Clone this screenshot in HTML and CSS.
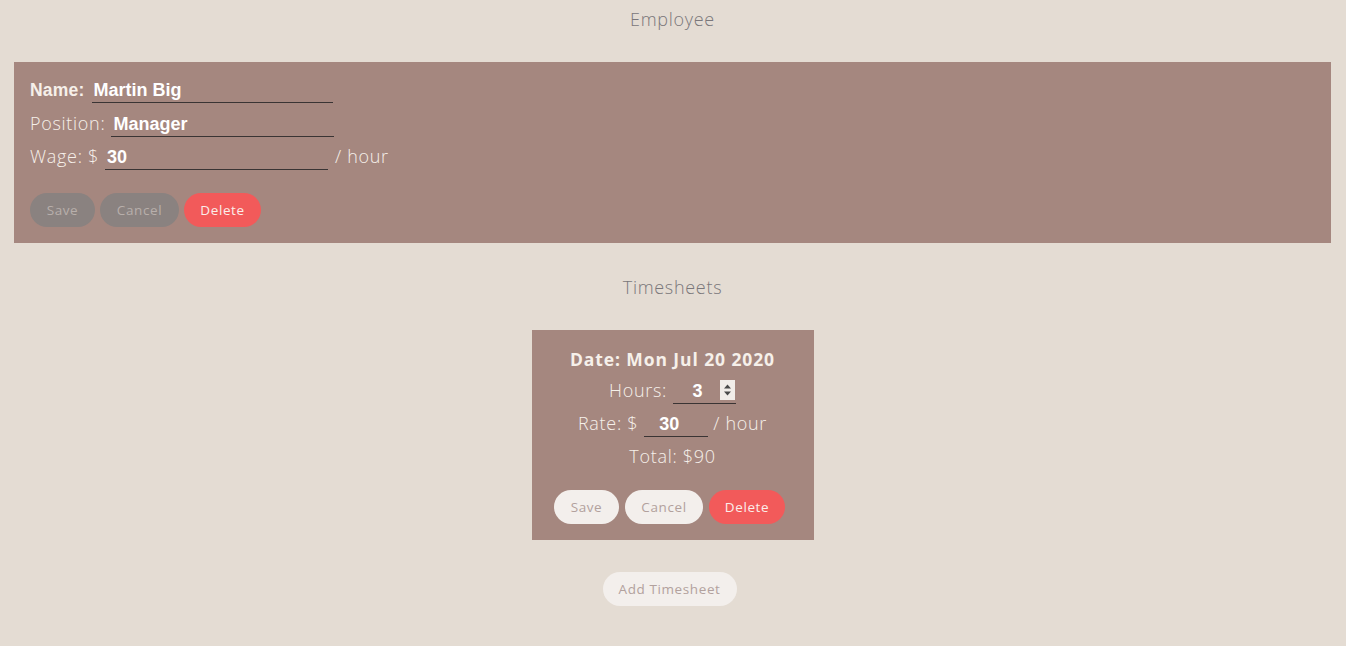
FILE: index.html
```html
<!DOCTYPE html>
<html>
<head>
<meta charset="utf-8">
<link rel="stylesheet" href="styles.css">
</head>
<body>
<main class="page">
  <h2 class="heading heading-employee">Employee</h2>
  <section class="card employee">
    <div class="row"><label class="lbl lbl-name">Name:</label><input class="field field-name" type="text" value="Martin Big"></div>
    <div class="row"><label class="lbl">Position:</label><input class="field field-wage" type="text" value="Manager"></div>
    <div class="row"><label class="lbl">Wage: $</label><input class="field field-wage" type="text" value="30"><span class="unit">/ hour</span></div>
    <div class="buttons">
      <button class="btn btn-muted btn-save">Save</button>
      <button class="btn btn-muted btn-cancel">Cancel</button>
      <button class="btn btn-danger btn-delete">Delete</button>
    </div>
  </section>
  <h2 class="heading heading-ts">Timesheets</h2>
  <section class="card timesheet">
    <div class="trow bold date">Date: Mon Jul 20 2020</div>
    <div class="trow"><span class="lbl lbl-hours">Hours:</span><span class="num-wrap"><input class="field field-hours" type="number" value="3"><span class="spinner"><svg width="15" height="20" viewBox="0 0 15 20"><rect width="15" height="20" fill="#f1ede9"/><path d="M4 8.5 L7.5 4.5 L11 8.5 Z" fill="#4a4a4a"/><path d="M4 11.5 L7.5 15.5 L11 11.5 Z" fill="#4a4a4a"/></svg></span></span></div>
    <div class="trow"><span class="lbl">Rate: $</span><input class="field field-rate" type="text" value="30"><span class="unit unit-rate">/ hour</span></div>
    <div class="trow">Total: $90</div>
    <div class="buttons tbuttons">
      <button class="btn btn-light btn-save">Save</button>
      <button class="btn btn-light btn-cancel">Cancel</button>
      <button class="btn btn-danger btn-delete">Delete</button>
    </div>
  </section>
  <button class="btn btn-light btn-add">Add Timesheet</button>
</main>
</body>
</html>
```
FILE: styles.css
```css
html, body {
  margin: 0;
  padding: 0;
  background: #e4dcd3;
}
body {
  font-family: "Open Sans", "Liberation Sans", sans-serif;
  color: #f6f0ea;
}
.page {
  display: flex;
  flex-direction: column;
  align-items: center;
  padding: 0 15px 0 14px;
}
.heading {
  margin: 0;
  font-weight: 300;
  font-size: 18px;
  letter-spacing: 0.7px;
  color: #7a777a;
  line-height: 20px;
}
.heading-employee {
  padding-top: 9px;
  margin-bottom: 33px;
}
.heading-ts {
  margin-top: 34px;
  margin-bottom: 33px;
}
.card {
  background: #a5877f;
  box-sizing: border-box;
}
.employee {
  align-self: stretch;
  padding: 12px 16px 16px;
  display: flex;
  flex-direction: column;
}
.row {
  display: flex;
  align-items: baseline;
  box-sizing: border-box;
  height: 33px;
  padding-top: 4px;
  font-size: 18px;
  font-weight: 300;
  letter-spacing: 0.7px;
}
.lbl {
  margin-right: 6px;
}
.bold {
  font-weight: 700;
}
.lbl-name {
  font-family: "Liberation Sans", Arial, sans-serif;
  font-weight: 700;
  font-size: 17.5px;
  letter-spacing: 0.2px;
  margin-right: 7px;
}
.field {
  font-family: "Liberation Sans", Arial, sans-serif;
  font-size: 18px;
  font-weight: 700;
  letter-spacing: 0;
  color: #fff;
  background: transparent;
  border: none;
  border-bottom: 1px solid #3a3434;
  padding: 2px 2px 1px;
  outline: none;
  box-sizing: border-box;
}
.field-name { width: 241px; }
.field-wage { width: 223px; }
.unit {
  margin-left: 7px;
}
.unit-rate {
  margin-left: 5px;
}
.buttons {
  display: flex;
  gap: 5px;
  margin-top: 20px;
}
.btn {
  font-family: "Open Sans", "Liberation Sans", sans-serif;
  font-size: 13.5px;
  letter-spacing: 0.6px;
  font-weight: 400;
  height: 34px;
  border: none;
  border-radius: 17px;
  padding: 0;
}
.btn-muted {
  background: #8a8280;
  color: #b8afab;
}
.btn-danger {
  background: #f25a5a;
  color: #fbeeea;
}
.btn-light {
  background: #f3efec;
  color: #b2a19d;
}
.btn-save { width: 65px; }
.btn-cancel { width: 79px; }
.btn-delete { width: 77px; }
.timesheet {
  width: 282px;
  padding: 14px 0 16px;
  display: flex;
  flex-direction: column;
  align-items: center;
}
.trow {
  box-sizing: border-box;
  height: 33px;
  padding-top: 3px;
  display: flex;
  align-items: baseline;
  justify-content: center;
  font-size: 18px;
  font-weight: 300;
  letter-spacing: 0.7px;
}
.date {
  height: 31px;
  font-size: 17.5px;
  font-weight: 700;
  letter-spacing: 0.9px;
}
.lbl-hours {
  margin-right: 6px;
}
.num-wrap {
  position: relative;
  display: inline-block;
}
.field-hours {
  width: 63px;
  text-align: center;
  padding-left: 4px;
  padding-right: 18px;
  -moz-appearance: textfield;
}
.field-hours::-webkit-inner-spin-button,
.field-hours::-webkit-outer-spin-button {
  -webkit-appearance: none;
  margin: 0;
}
.spinner {
  position: absolute;
  right: 1px;
  top: 2px;
  width: 15px;
  height: 20px;
  line-height: 0;
}
.field-rate {
  width: 64px;
  text-align: center;
  padding-right: 16px;
}
.tbuttons {
  margin-top: 16px;
  margin-right: 6px;
  gap: 6px;
}
.tbuttons .btn-cancel { width: 78px; }
.tbuttons .btn-delete { width: 76px; }
.btn-add {
  margin-top: 32px;
  margin-right: 6px;
  width: 134px;
}
```
